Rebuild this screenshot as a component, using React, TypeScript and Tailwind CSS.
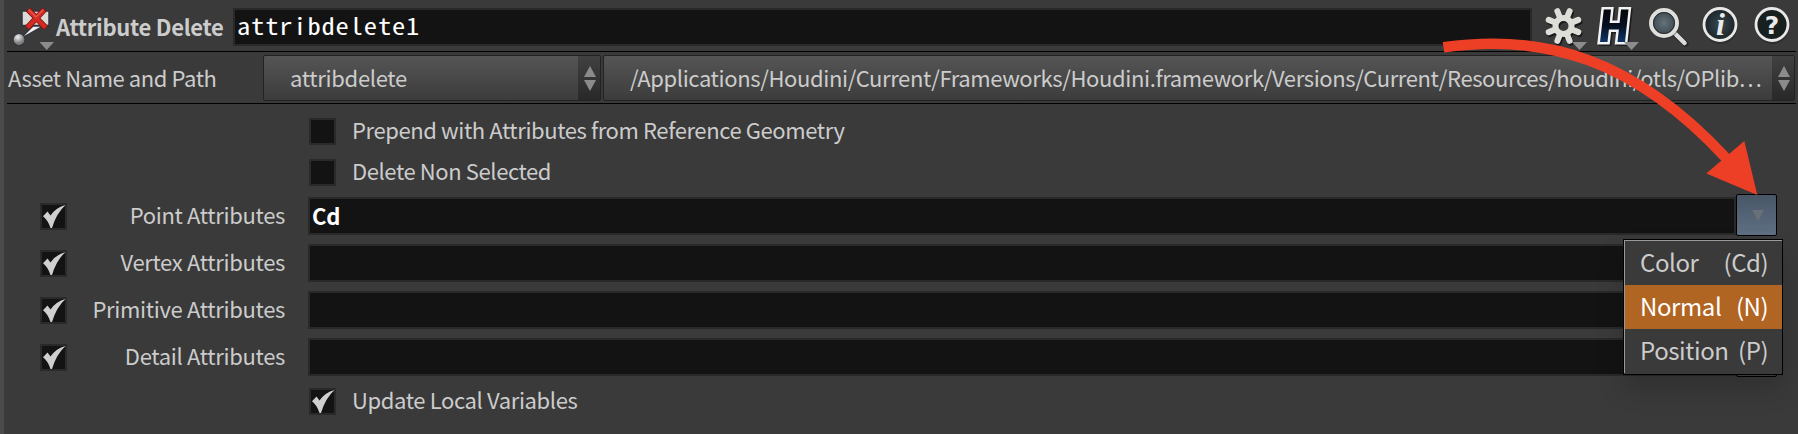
import React from "react";

function Check({ on }: { on?: boolean }) {
  return (
    <div className="h-[27px] w-[27px] shrink-0 border-2 border-[#2a2a2a] bg-[#131313]">
      {on && (
        <svg className="-m-px block h-[25px] w-[25px]" viewBox="0 0 25 25">
          <path d="M2 12.2 L6.5 7.500 L9.500 11.500 Q15 3.500 24.500 1 Q15.500 9 11 24 L9.500 24 Q7 16 2 12.200Z" fill="#cfcfcf" />
        </svg>
      )}
    </div>
  );
}

function Field({ text }: { text?: string }) {
  return (
    <div className="flex h-[38px] w-[1428px] shrink-0 items-center border-2 border-[#292929] bg-[#131313] pb-[2px] pl-[2px] text-[22px] font-bold leading-none tracking-[-0.3px] text-white">
      {text}
    </div>
  );
}

function Spinner() {
  return (
    <div className="flex h-full w-[22px] shrink-0 items-center justify-center bg-gradient-to-b from-[#414141] to-[#292929] pl-px">
      <svg width="12" height="26" viewBox="0 0 12 26" fill="#8b8b8b">
        <path d="M6 1L12 12H0ZM0 15H12L6 26Z" />
      </svg>
    </div>
  );
}

function AttrRow({ label, value, active }: { label: string; value?: string; active?: boolean }) {
  return (
    <div className="flex h-[38px] items-center">
      <div className="ml-[36px]"><Check on /></div>
      <div className="mr-[23px] w-[218px] shrink-0 pb-[4px] text-right tracking-[-0.32px]">{label}</div>
      <Field text={value} />
      {active ? (
        <div className="-mt-[2px] flex h-[42px] w-[41px] shrink-0 items-center justify-center rounded-[2px] border border-black bg-gradient-to-b from-[#485666] to-[#5f7084]">
          <svg className="relative left-px" width="12" height="11" viewBox="0 0 12 11"><path d="M0 0H12L6 11Z" fill="#6a7078" /></svg>
        </div>
      ) : (
        <div className="-mt-[2px] h-[42px] w-[41px] shrink-0 rounded-[2px] border border-black bg-[#444]" />
      )}
    </div>
  );
}

function MenuItem({ name, code, hot }: { name: string; code: string; hot?: boolean }) {
  return (
    <div className={hot ? "flex h-[44px] items-center justify-between bg-[#b16523] pb-[2px] pl-[15px] pr-[14px] text-white" : "flex h-[44px] items-center justify-between pb-[2px] pl-[15px] pr-[14px]"}>
      <span>{name}</span>
      <span className="tracking-[-0.5px]">{code}</span>
    </div>
  );
}

const TEETH = [22.5, 67.5, 112.5, 157.5, 202.5, 247.5, 292.5, 337.5];

function GearShape({ color }: { color: string }) {
  return (
    <g stroke={color} fill="none">
      <circle cx="1563.5" cy="26" r="8" strokeWidth="6" />
      {TEETH.map((a) => (
        <path key={a} d="M1563.5 17V10" strokeWidth="6" strokeLinecap="round" transform={`rotate(${a} 1563.5 26)`} />
      ))}
    </g>
  );
}

const H_PATH = "M1603.8 9.500H1611L1609.600 23H1619.600L1621 9.500H1628.500L1625 42H1617.500L1618.900 29.500H1608.900L1607.500 42H1600Z";

function ToolIcons() {
  return (
    <>
      <svg className="h-[51px] w-[64px] shrink-0" viewBox="1532 0 64 51">
        <g transform="translate(1.2 1.8)" opacity=".6"><GearShape color="#000" /></g>
        <GearShape color="#deded9" />
        <path d="M1572 42H1587L1579.500 50Z" fill="#8c8c8c" />
      </svg>
      <svg className="h-[51px] w-[49px] shrink-0" viewBox="1596 0 49 51">
        <defs>
          <linearGradient id="hGrad" x1="0" y1="0" x2="0" y2="1">
            <stop offset="0" stopColor="#04050a" />
            <stop offset=".5" stopColor="#071020" />
            <stop offset="1" stopColor="#0f3468" />
          </linearGradient>
        </defs>
        <path d={H_PATH} transform="translate(1.500 1.500)" stroke="#111" strokeWidth="5" opacity=".7" />
        <path d={H_PATH} stroke="#f2f2f2" strokeWidth="5" />
        <path d={H_PATH} fill="url(#hGrad)" />
        <path d="M1624 42H1639L1631.500 50Z" fill="#8c8c8c" />
      </svg>
      <svg className="h-[51px] w-[55px] shrink-0" viewBox="1645 0 55 51">
        <defs>
          <radialGradient id="lens"><stop offset="0" stopColor="#64727a" /><stop offset="1" stopColor="#3a464d" /></radialGradient>
        </defs>
        <path d="M1676 35L1685.500 44" stroke="#222" strokeWidth="6" strokeLinecap="round" opacity=".6" />
        <path d="M1674.500 33L1684.500 43" stroke="#dcdcdc" strokeWidth="4.500" strokeLinecap="round" />
        <circle cx="1664.500" cy="24" r="13" fill="none" stroke="#222" strokeWidth="4" opacity=".5" />
        <circle cx="1664" cy="23" r="13" fill="url(#lens)" stroke="#dededb" strokeWidth="4" />
        <circle cx="1664" cy="23" r="10.500" fill="none" stroke="#252d32" strokeWidth="1" />
      </svg>
      <svg className="h-[51px] w-[45px] shrink-0" viewBox="1700 0 45 51">
        <defs>
          <radialGradient id="disc"><stop offset="0" stopColor="#35484f" /><stop offset="1" stopColor="#1d2427" /></radialGradient>
        </defs>
        <circle cx="1720.500" cy="27" r="17" fill="#222" opacity=".5" />
        <circle cx="1720" cy="24.500" r="16" fill="url(#disc)" stroke="#e8e8e8" strokeWidth="2.800" />
        <text x="1720.500" y="35" textAnchor="middle" fontFamily="Liberation Serif" fontStyle="italic" fontWeight="bold" fontSize="32" fill="#eaeaea">i</text>
      </svg>
      <svg className="h-[51px] w-[49px] shrink-0" viewBox="1745 0 49 51">
        <circle cx="1772.500" cy="27" r="17" fill="#222" opacity=".5" />
        <circle cx="1772" cy="24.500" r="16" fill="#18201f" stroke="#e8e8e8" strokeWidth="2.800" />
        <text x="1772" y="33.500" textAnchor="middle" fontFamily="DejaVu Sans" fontWeight="bold" fontSize="25" fill="#eaeaea">?</text>
      </svg>
    </>
  );
}

function NodeIcon() {
  return (
    <svg className="ml-[6px] h-[51px] w-[46px] shrink-0" viewBox="10 0 46 51">
      <defs>
        <radialGradient id="ball" cx=".4" cy=".3"><stop offset="0" stopColor="#f0f0f0" /><stop offset="1" stopColor="#7f7f7f" /></radialGradient>
      </defs>
      <rect x="22" y="11" width="27" height="14.500" fill="#dbdbd8" stroke="#303540" strokeWidth="1.500" />
      <path d="M20 39L33 26H43Z" fill="#efefef" stroke="#303540" strokeWidth="1.300" />
      <circle cx="19" cy="39.500" r="6" fill="url(#ball)" stroke="#303540" strokeWidth="1.200" />
      <path d="M28 9.500L46 28M44.500 9.500L27 28" stroke="#801510" strokeWidth="6" />
      <path d="M28.500 10L45.500 27.500M44 10L27.500 27.500" stroke="#d42a22" strokeWidth="4.400" />
      <path d="M28.500 9.500L36 17L43.500 9.500" stroke="#e4554c" strokeWidth="1.500" fill="none" />
      <path d="M39.500 42H54L46.700 50Z" fill="#8c8c8c" />
    </svg>
  );
}

export default function App() {
  return (
    <div className="relative h-[434px] w-[1798px] overflow-hidden whitespace-nowrap border-l-4 border-[#4b4b4b] bg-[#3a3a3a] font-['Noto_Sans_CJK_SC',sans-serif] text-[22px] leading-none text-[#cccccc]">
      <div className="flex h-[51px]">
        <NodeIcon />
        <div className="w-[177px] shrink-0 pt-[15px] text-[22px] font-bold tracking-[-0.3px]">Attribute Delete</div>
        <div className="mt-[8px] h-[38px] w-[1299px] shrink-0 border-2 border-[#292929] bg-[#131313] pl-[2px] pt-[4px] font-['Noto_Sans_Mono_CJK_SC',monospace] text-[23px] text-white">
          <span className="inline-block origin-left scale-x-[1.15] tracking-[0.75px]">attribdelete1</span>
        </div>
        <ToolIcons />
      </div>
      <div className="ml-[3px] h-px w-[1789px] bg-black" />
      <div className="flex h-[51px] pt-[3px]">
        <div className="w-[259px] shrink-0 pl-[4px] pt-[11px] tracking-[-0.42px]">Asset Name and Path</div>
        <div className="flex h-[46px] w-[338px] shrink-0 items-center rounded-[2px] border border-[#222] bg-gradient-to-b from-[#555] to-[#3c3c3c]">
          <div className="flex-1 pb-[2px] pl-[26px] tracking-[-0.3px]">attribdelete</div>
          <Spinner />
        </div>
        <div className="ml-[2px] flex h-[46px] w-[1192px] shrink-0 items-center rounded-[2px] border border-[#222] bg-gradient-to-b from-[#555] to-[#3c3c3c]">
          <div className="flex-1 pb-[2px] pl-[26px] tracking-[-0.375px]">/Applications/Houdini/Current/Frameworks/Houdini.framework/Versions/Current/Resources/houdini/otls/OPlib…</div>
          <Spinner />
        </div>
      </div>
      <div className="ml-[3px] h-px w-[1789px] bg-black" />
      <div className="ml-[305px] mt-[14px] flex h-[27px] items-center gap-[16px]"><Check /><span className="pb-[6px] tracking-[-0.4px]">Prepend with Attributes from Reference Geometry</span></div>
      <div className="ml-[305px] mt-[14px] flex h-[27px] items-center gap-[16px]"><Check /><span className="pb-[6px] tracking-[-0.4px]">Delete Non Selected</span></div>
      <div className="mt-[11px] flex flex-col gap-[9px]">
        <AttrRow label="Point Attributes" value="Cd" active />
        <AttrRow label="Vertex Attributes" />
        <AttrRow label="Primitive Attributes" />
        <AttrRow label="Detail Attributes" />
      </div>
      <div className="ml-[305px] mt-[12px] flex h-[27px] items-center gap-[16px]"><Check on /><span className="pb-[6px] tracking-[-0.37px]">Update Local Variables</span></div>
      <div className="absolute left-[1619px] top-[239px] h-[136px] w-[160px] border border-black bg-[#3a3a3a] text-[24px] tracking-[-0.4px] shadow-[0_14px_24px_rgba(0,0,0,0.18)]">
        <div className="border-l border-t border-[#999]">
          <MenuItem name="Color" code="(Cd)" />
          <MenuItem name="Normal" code="(N)" hot />
          <MenuItem name="Position" code="(P)" />
        </div>
      </div>
      <svg className="absolute left-[1436px] top-[30px]" width="330" height="170" viewBox="1440 30 330 170">
        <path d="M1443.500 47.300C1545 33 1634 59 1726 158" fill="none" stroke="#ed3f25" strokeWidth="10.500" />
        <path d="M1744.300 141L1757.300 195L1706.300 173.500Z" fill="#ed3f25" />
      </svg>
    </div>
  );
}
